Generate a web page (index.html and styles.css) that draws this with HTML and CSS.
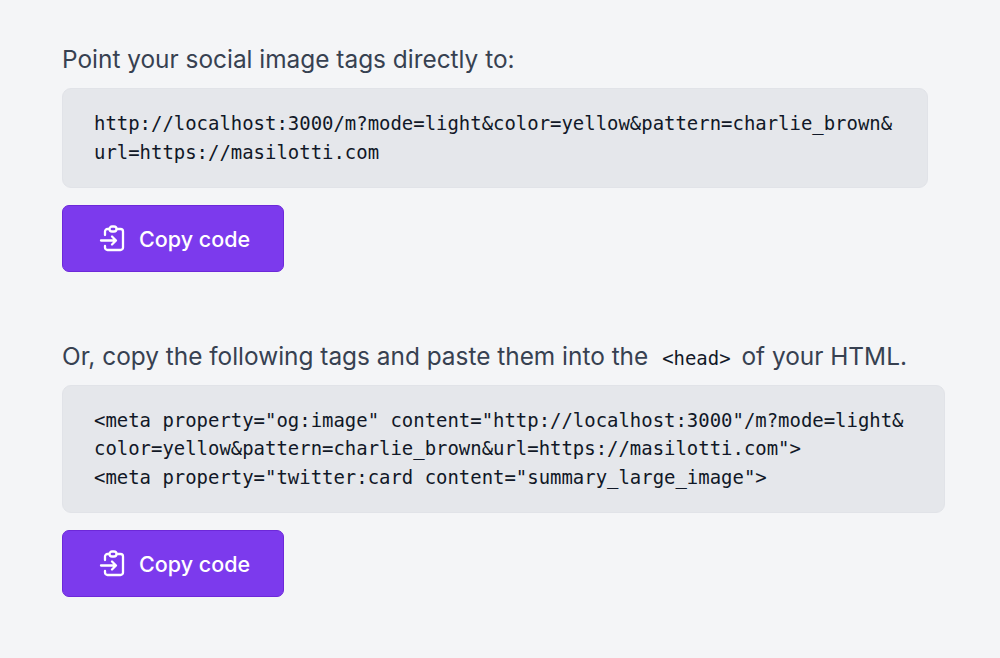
FILE: index.html
```html
<!DOCTYPE html>
<html lang="en">
<head>
<meta charset="utf-8">
<title>Social image tags</title>
<link rel="stylesheet" href="styles.css">
</head>
<body>
<main class="page">
  <section class="block block-first">
    <p class="lead">Point your social image tags directly to:</p>
    <pre class="code code-short">http://localhost:3000/m?mode=light&amp;color=yellow&amp;pattern=charlie_brown&amp;
url=https://masilotti.com</pre>
    <button class="copy" type="button">
      <svg class="copy-icon" viewBox="0 0 26 29" fill="none" stroke="currentColor" stroke-width="2.3" stroke-linecap="round" stroke-linejoin="round" aria-hidden="true"><path d="M10 5H8.5A2.5 2.5 0 0 0 6 7.5V11M18 5h3.5A2.5 2.5 0 0 1 24 7.5v16a2.5 2.5 0 0 1-2.5 2.5h-13A2.5 2.5 0 0 1 6 23.5V22"/><rect x="10.5" y="2.5" width="7" height="5" rx="2.5"/><path d="M2 16.5h14.5M13 12.5l4 4-4 4"/></svg>
      <span>Copy code</span>
    </button>
  </section>
  <section class="block">
    <p class="lead">Or, copy the following tags and paste them into the <code class="inline">&lt;head&gt;</code> of your HTML.</p>
    <pre class="code code-long">&lt;meta property="og:image" content="http://localhost:3000"/m?mode=light&amp;
color=yellow&amp;pattern=charlie_brown&amp;url=https://masilotti.com"&gt;
&lt;meta property="twitter:card content="summary_large_image"&gt;</pre>
    <button class="copy" type="button">
      <svg class="copy-icon" viewBox="0 0 26 29" fill="none" stroke="currentColor" stroke-width="2.3" stroke-linecap="round" stroke-linejoin="round" aria-hidden="true"><path d="M10 5H8.5A2.5 2.5 0 0 0 6 7.5V11M18 5h3.5A2.5 2.5 0 0 1 24 7.5v16a2.5 2.5 0 0 1-2.5 2.5h-13A2.5 2.5 0 0 1 6 23.5V22"/><rect x="10.5" y="2.5" width="7" height="5" rx="2.5"/><path d="M2 16.5h14.5M13 12.5l4 4-4 4"/></svg>
      <span>Copy code</span>
    </button>
  </section>
</main>
</body>
</html>
```
FILE: styles.css
```css
* { box-sizing: border-box; }
html, body { margin: 0; height: 100%; }
body {
  background: #f4f5f7;
  color: #374151;
  font-family: Inter, "Liberation Sans", sans-serif;
  overflow: hidden;
}
.page {
  display: flex;
  flex-direction: column;
  gap: 67px;
  padding: 42px 0 0 62px;
}
.block {
  display: flex;
  flex-direction: column;
  align-items: flex-start;
}
.lead {
  margin: 0 0 12px;
  font-size: 24.4px;
  line-height: 34px;
}
.inline {
  font-family: "DejaVu Sans Mono", monospace;
  font-size: 18.95px;
  line-height: 1;
  color: #111827;
  margin: 0 4px 0 7px;
}
.code {
  margin: 0 0 17px;
  padding: 20px 30px 21px 31px;
  background: #e5e7eb;
  border: 1px solid #e1e3e8;
  border-radius: 9px;
  color: #111827;
  font-family: "DejaVu Sans Mono", monospace;
  font-size: 18.95px;
  line-height: 28.5px;
}
.code-short { width: 866px; }
.code-long { width: 883px; padding-top: 19.5px; padding-bottom: 21px; }
.copy {
  display: flex;
  align-items: center;
  gap: 14px;
  width: 222px;
  height: 67px;
  padding: 0 0 0 36px;
  background: #7c3aed;
  border: 1px solid #6d28d9;
  border-radius: 7px;
  color: #fff;
  font-family: Inter, "Liberation Sans", sans-serif;
  font-size: 21.5px;
  font-weight: 500;
}
.copy-icon { width: 26px; height: 29px; flex: none; }
```
